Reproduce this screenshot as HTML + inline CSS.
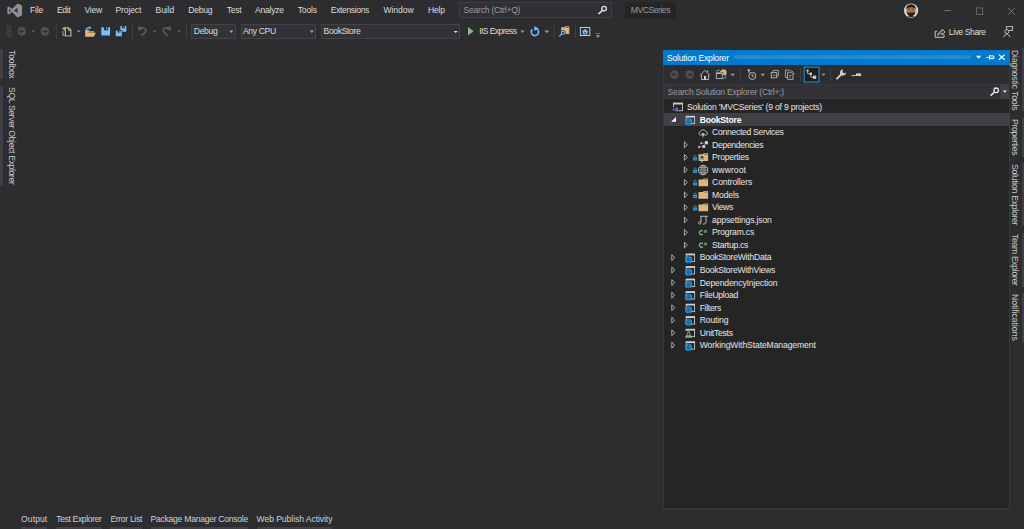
<!DOCTYPE html>
<html><head><meta charset="utf-8"><title>MVCSeries - Microsoft Visual Studio</title>
<style>
html,body{margin:0;padding:0;background:#2d2d30;overflow:hidden}
body{width:1024px;height:529px;position:relative;font-family:"Liberation Sans",sans-serif;font-size:8.6px;color:#d6d6d6}
.t{position:absolute;white-space:pre;line-height:12px;height:12px;font-size:8.6px}
.v{transform-origin:0 0;transform:rotate(90deg);color:#c8c8c8}
.b{position:absolute}
svg{position:absolute;overflow:visible}
</style></head><body>
<!-- search box & title -->
<div class="b" style="left:459.2px;top:2.4px;width:152.6px;height:15.2px;background:#303034;box-shadow:inset 0 0 0 1px #3d3d43"></div>
<div class="b" style="left:625px;top:2px;width:51px;height:17px;background:#252526"></div>
<!-- toolbar combos -->
<div class="b" style="left:190.7px;top:23.7px;width:45.5px;height:15px;background:#333337;box-shadow:inset 0 0 0 1px #434346"></div>
<div class="b" style="left:240.5px;top:23.7px;width:75.8px;height:15px;background:#333337;box-shadow:inset 0 0 0 1px #434346"></div>
<div class="b" style="left:321.2px;top:23.7px;width:138.5px;height:15px;background:#333337;box-shadow:inset 0 0 0 1px #434346"></div>
<!-- left auto-hide bars -->
<div class="b" style="left:0;top:49px;width:3.3px;height:29.6px;background:#3f3f46"></div>
<div class="b" style="left:0;top:86px;width:3.3px;height:99.5px;background:#3f3f46"></div>
<!-- right auto-hide bars -->
<div class="b" style="left:1021.6px;top:48.3px;width:2.4px;height:63.0px;background:#3f3f46"></div>
<div class="b" style="left:1021.6px;top:118px;width:2.4px;height:38.6px;background:#3f3f46"></div>
<div class="b" style="left:1021.6px;top:163.4px;width:2.4px;height:62.9px;background:#3f3f46"></div>
<div class="b" style="left:1021.6px;top:233px;width:2.4px;height:54.0px;background:#3f3f46"></div>
<div class="b" style="left:1021.6px;top:293px;width:2.4px;height:50.4px;background:#3f3f46"></div>

<!-- bottom underlines -->
<div class="b" style="left:21.1px;top:526.8px;width:26.2px;height:3px;background:#3f3f46"></div>
<div class="b" style="left:56.2px;top:526.8px;width:45.4px;height:3px;background:#3f3f46"></div>
<div class="b" style="left:110.4px;top:526.8px;width:31.6px;height:3px;background:#3f3f46"></div>
<div class="b" style="left:150.6px;top:526.8px;width:97.4px;height:3px;background:#3f3f46"></div>
<div class="b" style="left:256.6px;top:526.8px;width:75.8px;height:3px;background:#3f3f46"></div>
<!-- solution explorer panel -->
<div class="b" style="left:663px;top:50px;width:347.2px;height:459.5px;background:#37373b"></div>
<div class="b" style="left:664.1px;top:50px;width:345.2px;height:458.1px;background:#252526"></div>
<div class="b" style="left:664.1px;top:64.9px;width:345.2px;height:19.2px;background:#2d2d30"></div>
<div class="b" style="left:663.4px;top:50px;width:346.5px;height:14.9px;background:#007acc"></div>

<div class="b" style="left:664.1px;top:84px;width:337px;height:14.8px;background:#323236;box-shadow:inset 0 0 0 0.8px #3d3d43"></div>
<div class="b" style="left:1001.1px;top:84px;width:8.2px;height:14.8px;background:#3f3f46"></div>
<div class="b" style="left:664.1px;top:113.1px;width:345.6px;height:12.7px;background:#3f3f46"></div>
<svg width="1024" height="529" viewBox="0 0 1024 529" style="left:0;top:0">
<path fill="#8e8e95" fill-rule="evenodd" d="M17.6 3.5 L22 5.4 V15.6 L17.6 17.5 L12 12.1 L9 14.6 L7.4 13.8 V7.2 L9 6.4 L12 8.9 Z M17.5 7.7 L14.1 10.5 L17.5 13.3 Z M9.1 8.7 V12.3 L11 10.5 Z"/>
<path fill="#48484d" d="M6.60 24.80h1.25v1.25h-1.25zM9.10 24.80h1.25v1.25h-1.25zM7.85 26.05h1.25v1.25h-1.25zM10.35 26.05h1.25v1.25h-1.25zM6.60 27.30h1.25v1.25h-1.25zM9.10 27.30h1.25v1.25h-1.25zM7.85 28.55h1.25v1.25h-1.25zM10.35 28.55h1.25v1.25h-1.25zM6.60 29.80h1.25v1.25h-1.25zM9.10 29.80h1.25v1.25h-1.25zM7.85 31.05h1.25v1.25h-1.25zM10.35 31.05h1.25v1.25h-1.25zM6.60 32.30h1.25v1.25h-1.25zM9.10 32.30h1.25v1.25h-1.25zM7.85 33.55h1.25v1.25h-1.25zM10.35 33.55h1.25v1.25h-1.25zM6.60 34.80h1.25v1.25h-1.25zM9.10 34.80h1.25v1.25h-1.25zM7.85 36.05h1.25v1.25h-1.25zM10.35 36.05h1.25v1.25h-1.25z"/>
<circle cx="21.7" cy="31.4" r="4.3" fill="#505054"/>
<path d="M24.0 31.4 H19.7 M21.4 29.5 L19.5 31.4 L21.4 33.3" stroke="#2d2d30" stroke-width="1" fill="none"/>
<path fill="#626266" d="M31.50 30.6 H35.30 L33.40 32.69 Z"/>
<circle cx="44.9" cy="31.4" r="4.3" fill="#505054"/>
<path d="M42.6 31.4 H46.9 M45.199999999999996 29.5 L47.1 31.4 L45.199999999999996 33.3" stroke="#2d2d30" stroke-width="1" fill="none"/>
<rect x="55.9" y="24.3" width="1" height="15.2" fill="#414145"/>
<path d="M65.4 27.7 H68.6 L70.9 30 V36 H65.4 Z" stroke="#b6b6b6" stroke-width="1.15" fill="#2a2a2c"/><path d="M68.4 27.8 V30.2 H70.8" stroke="#d8d8d8" stroke-width="0.8" fill="none"/><path d="M62.9 31.2 V35.3 H64.8" stroke="#a8a8a8" stroke-width="1" fill="none"/>
<path fill="#d9a762" d="M64.1 26 L64.9 27.9 L66.6 28.6 L64.9 29.3 L64.1 31.2 L63.3 29.3 L61.6 28.6 L63.3 27.9 Z"/>
<path fill="#9a9a9a" d="M76.80 30.5 H80.60 L78.70 32.59 Z"/>
<path fill="#dcb67a" d="M85.2 30 H88.6 L89.6 31 H94.2 V32.7 H95.8 L93.8 36.8 H85.2 Z"/>
<path d="M88.6 32.1 H94" stroke="#5c4a2c" stroke-width="0.8" fill="none"/>
<path d="M86.4 30.6 C86 28.2 88 27.2 89.8 27.9" stroke="#63b0f4" stroke-width="1.5" fill="none"/><path fill="#63b0f4" d="M88.8 26 L91.6 27.6 L89.2 29.8 Z"/>
<path fill="#75beff" fill-rule="evenodd" d="M101.3 27.2 H110.0 V35.6 H101.3 Z M103.91 27.2 V30.22 H108.09 V27.2 Z"/>
<rect x="106.17" y="27.2" width="1.04" height="1.85" fill="#75beff"/>
<rect x="119.3" y="29.5" width="3.8" height="3.8" fill="#2d2d30"/>
<path fill="#75beff" fill-rule="evenodd" d="M120.4 26.1 H126.30000000000001 V31.8 H120.4 Z M122.17 26.1 V28.15 H125.00 V26.1 Z"/>
<rect x="123.70" y="26.1" width="0.71" height="1.25" fill="#75beff"/>
<rect x="115.2" y="30" width="7.2" height="6.8" fill="#2d2d30"/>
<path fill="#75beff" fill-rule="evenodd" d="M115.8 30.6 H121.8 V36.2 H115.8 Z M117.60 30.6 V32.62 H120.48 V30.6 Z"/>
<rect x="119.16" y="30.6" width="0.72" height="1.23" fill="#75beff"/>
<rect x="131.9" y="24.3" width="1" height="14.499999999999996" fill="#414145"/>
<path fill="#5e5e61" d="M138 26.6 L143 27.3 L138.7 31.6 Z"/><path d="M140.8 29.2 C143.4 26.8 147 28.6 145.6 31.4 C144.8 33 143 34.2 141.3 35.6" stroke="#5e5e61" stroke-width="1.5" fill="none"/>
<path fill="#5c5c5f" d="M152.40 30.6 H156.60 L154.50 32.91 Z"/>
<path fill="#5e5e61" d="M171.1 26.6 L166.1 27.3 L170.4 31.6 Z"/><path d="M168.3 29.2 C165.7 26.8 162.1 28.6 163.5 31.4 C164.3 33 166.1 34.2 167.8 35.6" stroke="#5e5e61" stroke-width="1.5" fill="none"/>
<path fill="#5c5c5f" d="M176.90 30.6 H181.20 L179.05 32.97 Z"/>
<rect x="185.9" y="24.3" width="1" height="14.499999999999996" fill="#414145"/>
<path fill="#a0a0a0" d="M229.10 30.6 H233.50 L231.30 33.02 Z"/>
<path fill="#a0a0a0" d="M309.60 30.6 H314.00 L311.80 33.02 Z"/>
<path fill="#e6e6e6" d="M453.70 30.9 H457.70 L455.70 33.10 Z"/>
<path fill="#84b884" d="M468 27 L473.6 31.3 L468 35.6 Z"/>
<path fill="#9a9a9a" d="M520.40 30.6 H524.60 L522.50 32.91 Z"/>
<path d="M536.6 28.6 A3.7 3.7 0 1 1 532.2 29.4" stroke="#75beff" stroke-width="1.6" fill="none" transform="rotate(0 534.9 32)"/>
<path fill="#75beff" d="M534.3 26 L538.6 28.4 L534.3 30.9 Z"/>
<path fill="#9a9a9a" d="M544.40 30.5 H549.30 L546.85 33.19 Z"/>
<rect x="553.8" y="24.5" width="1" height="13.700000000000003" fill="#414145"/>
<path fill="#dcb67a" d="M561.2 27.2 H564.6 L565.4 26.2 H569.3 V34 H561.2 Z"/>
<rect x="565.8" y="26.9" width="2.8" height="0.7" fill="#2d2d30"/>
<circle cx="563" cy="32.7" r="2.6" fill="#2d2d30"/><circle cx="563" cy="32.7" r="1.6" fill="#2d2d30" stroke="#75beff" stroke-width="1.1"/><path d="M561.8 33.9 L559.4 36.2" stroke="#75beff" stroke-width="1.3"/>
<rect x="575.1" y="24.5" width="1" height="13.700000000000003" fill="#414145"/>
<rect x="580.4" y="27.5" width="9.4" height="8" fill="none" stroke="#c8c8c8" stroke-width="1"/>
<path fill="#75beff" d="M585.1 28.9 L588 31.2 L587 34.4 H583.2 L582.2 31.2 Z"/><path fill="#2d2d30" d="M584.3 32.2 h1.6 v1.4 h-1.6z"/>
<rect x="595.6" y="33.2" width="4.6" height="0.8" fill="#8a8a8a"/>
<path fill="#9a9a9a" d="M595.50 35.2 H600.30 L597.90 37.84 Z"/>
<circle cx="604.1" cy="8.6" r="2.3" fill="none" stroke="#e0e0e0" stroke-width="1.3"/><path d="M602.5 10.3 L598.4 14" stroke="#e0e0e0" stroke-width="1.6"/>
<circle cx="911.1" cy="10.6" r="7.2" fill="#cfcfcf"/>
<clipPath id="av"><circle cx="911.1" cy="10.6" r="6.6"/></clipPath>
<g clip-path="url(#av)"><rect x="904" y="3" width="15" height="15" fill="#d2d0cc"/><path fill="#34343a" d="M903 18.5 C904 14.8 918 14.8 919 18.5 Z"/><ellipse cx="911" cy="10.4" rx="4.5" ry="5.4" fill="#a9734b"/><path fill="#2a1a12" d="M906.3 9.4 C905.6 2.6 916.4 2.6 915.7 9.4 C915 6.6 907 6.6 906.3 9.4 Z"/><path fill="#30201a" d="M906.6 11.2 C906.8 18 915.2 18 915.4 11.2 C914.6 13.4 913 12.4 911 12.4 C909 12.4 907.4 13.4 906.6 11.2 Z"/><path d="M908.2 9.2 h1.6 M912.2 9.2 h1.6" stroke="#3a2418" stroke-width="0.8"/></g>
<rect x="944.1" y="10.1" width="7" height="1" fill="#707070"/>
<rect x="976.4" y="7.9" width="6.2" height="6.6" fill="none" stroke="#6c6c6c" stroke-width="0.9"/>
<path d="M1008 7.8 L1015 14.7 M1015 7.8 L1008 14.7" stroke="#808080" stroke-width="0.9"/>
<path d="M937.2 31.2 H935.2 V37.3 H944 V34.6" stroke="#c8c8c8" stroke-width="1" fill="none"/>
<path d="M937.8 35.6 C938 32.4 940 31.2 942 31.2 V29 L945 32 L942 35 V33 C940.2 33 939 33.6 937.8 35.6 Z" fill="none" stroke="#c8c8c8" stroke-width="0.9"/>
<rect x="1006.4" y="26.6" width="6.2" height="3.8" fill="none" stroke="#c8c8c8" stroke-width="0.9"/>
<circle cx="1006.8" cy="31.6" r="2" fill="#2d2d30" stroke="#c8c8c8" stroke-width="0.9"/><path d="M1003.2 37 L1006.8 33.6 L1010.4 37" stroke="#c8c8c8" stroke-width="1" fill="none"/>
<path fill="#4b9fdc" d="M733.80 55.2h1.2v1.2h-1.2zM733.80 57.7h1.2v1.2h-1.2zM735.05 56.45h1.2v1.2h-1.2zM736.30 55.2h1.2v1.2h-1.2zM736.30 57.7h1.2v1.2h-1.2zM737.55 56.45h1.2v1.2h-1.2zM738.80 55.2h1.2v1.2h-1.2zM738.80 57.7h1.2v1.2h-1.2zM740.05 56.45h1.2v1.2h-1.2zM741.30 55.2h1.2v1.2h-1.2zM741.30 57.7h1.2v1.2h-1.2zM742.55 56.45h1.2v1.2h-1.2zM743.80 55.2h1.2v1.2h-1.2zM743.80 57.7h1.2v1.2h-1.2zM745.05 56.45h1.2v1.2h-1.2zM746.30 55.2h1.2v1.2h-1.2zM746.30 57.7h1.2v1.2h-1.2zM747.55 56.45h1.2v1.2h-1.2zM748.80 55.2h1.2v1.2h-1.2zM748.80 57.7h1.2v1.2h-1.2zM750.05 56.45h1.2v1.2h-1.2zM751.30 55.2h1.2v1.2h-1.2zM751.30 57.7h1.2v1.2h-1.2zM752.55 56.45h1.2v1.2h-1.2zM753.80 55.2h1.2v1.2h-1.2zM753.80 57.7h1.2v1.2h-1.2zM755.05 56.45h1.2v1.2h-1.2zM756.30 55.2h1.2v1.2h-1.2zM756.30 57.7h1.2v1.2h-1.2zM757.55 56.45h1.2v1.2h-1.2zM758.80 55.2h1.2v1.2h-1.2zM758.80 57.7h1.2v1.2h-1.2zM760.05 56.45h1.2v1.2h-1.2zM761.30 55.2h1.2v1.2h-1.2zM761.30 57.7h1.2v1.2h-1.2zM762.55 56.45h1.2v1.2h-1.2zM763.80 55.2h1.2v1.2h-1.2zM763.80 57.7h1.2v1.2h-1.2zM765.05 56.45h1.2v1.2h-1.2zM766.30 55.2h1.2v1.2h-1.2zM766.30 57.7h1.2v1.2h-1.2zM767.55 56.45h1.2v1.2h-1.2zM768.80 55.2h1.2v1.2h-1.2zM768.80 57.7h1.2v1.2h-1.2zM770.05 56.45h1.2v1.2h-1.2zM771.30 55.2h1.2v1.2h-1.2zM771.30 57.7h1.2v1.2h-1.2zM772.55 56.45h1.2v1.2h-1.2zM773.80 55.2h1.2v1.2h-1.2zM773.80 57.7h1.2v1.2h-1.2zM775.05 56.45h1.2v1.2h-1.2zM776.30 55.2h1.2v1.2h-1.2zM776.30 57.7h1.2v1.2h-1.2zM777.55 56.45h1.2v1.2h-1.2zM778.80 55.2h1.2v1.2h-1.2zM778.80 57.7h1.2v1.2h-1.2zM780.05 56.45h1.2v1.2h-1.2zM781.30 55.2h1.2v1.2h-1.2zM781.30 57.7h1.2v1.2h-1.2zM782.55 56.45h1.2v1.2h-1.2zM783.80 55.2h1.2v1.2h-1.2zM783.80 57.7h1.2v1.2h-1.2zM785.05 56.45h1.2v1.2h-1.2zM786.30 55.2h1.2v1.2h-1.2zM786.30 57.7h1.2v1.2h-1.2zM787.55 56.45h1.2v1.2h-1.2zM788.80 55.2h1.2v1.2h-1.2zM788.80 57.7h1.2v1.2h-1.2zM790.05 56.45h1.2v1.2h-1.2zM791.30 55.2h1.2v1.2h-1.2zM791.30 57.7h1.2v1.2h-1.2zM792.55 56.45h1.2v1.2h-1.2zM793.80 55.2h1.2v1.2h-1.2zM793.80 57.7h1.2v1.2h-1.2zM795.05 56.45h1.2v1.2h-1.2zM796.30 55.2h1.2v1.2h-1.2zM796.30 57.7h1.2v1.2h-1.2zM797.55 56.45h1.2v1.2h-1.2zM798.80 55.2h1.2v1.2h-1.2zM798.80 57.7h1.2v1.2h-1.2zM800.05 56.45h1.2v1.2h-1.2zM801.30 55.2h1.2v1.2h-1.2zM801.30 57.7h1.2v1.2h-1.2zM802.55 56.45h1.2v1.2h-1.2zM803.80 55.2h1.2v1.2h-1.2zM803.80 57.7h1.2v1.2h-1.2zM805.05 56.45h1.2v1.2h-1.2zM806.30 55.2h1.2v1.2h-1.2zM806.30 57.7h1.2v1.2h-1.2zM807.55 56.45h1.2v1.2h-1.2zM808.80 55.2h1.2v1.2h-1.2zM808.80 57.7h1.2v1.2h-1.2zM810.05 56.45h1.2v1.2h-1.2zM811.30 55.2h1.2v1.2h-1.2zM811.30 57.7h1.2v1.2h-1.2zM812.55 56.45h1.2v1.2h-1.2zM813.80 55.2h1.2v1.2h-1.2zM813.80 57.7h1.2v1.2h-1.2zM815.05 56.45h1.2v1.2h-1.2zM816.30 55.2h1.2v1.2h-1.2zM816.30 57.7h1.2v1.2h-1.2zM817.55 56.45h1.2v1.2h-1.2zM818.80 55.2h1.2v1.2h-1.2zM818.80 57.7h1.2v1.2h-1.2zM820.05 56.45h1.2v1.2h-1.2zM821.30 55.2h1.2v1.2h-1.2zM821.30 57.7h1.2v1.2h-1.2zM822.55 56.45h1.2v1.2h-1.2zM823.80 55.2h1.2v1.2h-1.2zM823.80 57.7h1.2v1.2h-1.2zM825.05 56.45h1.2v1.2h-1.2zM826.30 55.2h1.2v1.2h-1.2zM826.30 57.7h1.2v1.2h-1.2zM827.55 56.45h1.2v1.2h-1.2zM828.80 55.2h1.2v1.2h-1.2zM828.80 57.7h1.2v1.2h-1.2zM830.05 56.45h1.2v1.2h-1.2zM831.30 55.2h1.2v1.2h-1.2zM831.30 57.7h1.2v1.2h-1.2zM832.55 56.45h1.2v1.2h-1.2zM833.80 55.2h1.2v1.2h-1.2zM833.80 57.7h1.2v1.2h-1.2zM835.05 56.45h1.2v1.2h-1.2zM836.30 55.2h1.2v1.2h-1.2zM836.30 57.7h1.2v1.2h-1.2zM837.55 56.45h1.2v1.2h-1.2zM838.80 55.2h1.2v1.2h-1.2zM838.80 57.7h1.2v1.2h-1.2zM840.05 56.45h1.2v1.2h-1.2zM841.30 55.2h1.2v1.2h-1.2zM841.30 57.7h1.2v1.2h-1.2zM842.55 56.45h1.2v1.2h-1.2zM843.80 55.2h1.2v1.2h-1.2zM843.80 57.7h1.2v1.2h-1.2zM845.05 56.45h1.2v1.2h-1.2zM846.30 55.2h1.2v1.2h-1.2zM846.30 57.7h1.2v1.2h-1.2zM847.55 56.45h1.2v1.2h-1.2zM848.80 55.2h1.2v1.2h-1.2zM848.80 57.7h1.2v1.2h-1.2zM850.05 56.45h1.2v1.2h-1.2zM851.30 55.2h1.2v1.2h-1.2zM851.30 57.7h1.2v1.2h-1.2zM852.55 56.45h1.2v1.2h-1.2zM853.80 55.2h1.2v1.2h-1.2zM853.80 57.7h1.2v1.2h-1.2zM855.05 56.45h1.2v1.2h-1.2zM856.30 55.2h1.2v1.2h-1.2zM856.30 57.7h1.2v1.2h-1.2zM857.55 56.45h1.2v1.2h-1.2zM858.80 55.2h1.2v1.2h-1.2zM858.80 57.7h1.2v1.2h-1.2zM860.05 56.45h1.2v1.2h-1.2zM861.30 55.2h1.2v1.2h-1.2zM861.30 57.7h1.2v1.2h-1.2zM862.55 56.45h1.2v1.2h-1.2zM863.80 55.2h1.2v1.2h-1.2zM863.80 57.7h1.2v1.2h-1.2zM865.05 56.45h1.2v1.2h-1.2zM866.30 55.2h1.2v1.2h-1.2zM866.30 57.7h1.2v1.2h-1.2zM867.55 56.45h1.2v1.2h-1.2zM868.80 55.2h1.2v1.2h-1.2zM868.80 57.7h1.2v1.2h-1.2zM870.05 56.45h1.2v1.2h-1.2zM871.30 55.2h1.2v1.2h-1.2zM871.30 57.7h1.2v1.2h-1.2zM872.55 56.45h1.2v1.2h-1.2zM873.80 55.2h1.2v1.2h-1.2zM873.80 57.7h1.2v1.2h-1.2zM875.05 56.45h1.2v1.2h-1.2zM876.30 55.2h1.2v1.2h-1.2zM876.30 57.7h1.2v1.2h-1.2zM877.55 56.45h1.2v1.2h-1.2zM878.80 55.2h1.2v1.2h-1.2zM878.80 57.7h1.2v1.2h-1.2zM880.05 56.45h1.2v1.2h-1.2zM881.30 55.2h1.2v1.2h-1.2zM881.30 57.7h1.2v1.2h-1.2zM882.55 56.45h1.2v1.2h-1.2zM883.80 55.2h1.2v1.2h-1.2zM883.80 57.7h1.2v1.2h-1.2zM885.05 56.45h1.2v1.2h-1.2zM886.30 55.2h1.2v1.2h-1.2zM886.30 57.7h1.2v1.2h-1.2zM887.55 56.45h1.2v1.2h-1.2zM888.80 55.2h1.2v1.2h-1.2zM888.80 57.7h1.2v1.2h-1.2zM890.05 56.45h1.2v1.2h-1.2zM891.30 55.2h1.2v1.2h-1.2zM891.30 57.7h1.2v1.2h-1.2zM892.55 56.45h1.2v1.2h-1.2zM893.80 55.2h1.2v1.2h-1.2zM893.80 57.7h1.2v1.2h-1.2zM895.05 56.45h1.2v1.2h-1.2zM896.30 55.2h1.2v1.2h-1.2zM896.30 57.7h1.2v1.2h-1.2zM897.55 56.45h1.2v1.2h-1.2zM898.80 55.2h1.2v1.2h-1.2zM898.80 57.7h1.2v1.2h-1.2zM900.05 56.45h1.2v1.2h-1.2zM901.30 55.2h1.2v1.2h-1.2zM901.30 57.7h1.2v1.2h-1.2zM902.55 56.45h1.2v1.2h-1.2zM903.80 55.2h1.2v1.2h-1.2zM903.80 57.7h1.2v1.2h-1.2zM905.05 56.45h1.2v1.2h-1.2zM906.30 55.2h1.2v1.2h-1.2zM906.30 57.7h1.2v1.2h-1.2zM907.55 56.45h1.2v1.2h-1.2zM908.80 55.2h1.2v1.2h-1.2zM908.80 57.7h1.2v1.2h-1.2zM910.05 56.45h1.2v1.2h-1.2zM911.30 55.2h1.2v1.2h-1.2zM911.30 57.7h1.2v1.2h-1.2zM912.55 56.45h1.2v1.2h-1.2zM913.80 55.2h1.2v1.2h-1.2zM913.80 57.7h1.2v1.2h-1.2zM915.05 56.45h1.2v1.2h-1.2zM916.30 55.2h1.2v1.2h-1.2zM916.30 57.7h1.2v1.2h-1.2zM917.55 56.45h1.2v1.2h-1.2zM918.80 55.2h1.2v1.2h-1.2zM918.80 57.7h1.2v1.2h-1.2zM920.05 56.45h1.2v1.2h-1.2zM921.30 55.2h1.2v1.2h-1.2zM921.30 57.7h1.2v1.2h-1.2zM922.55 56.45h1.2v1.2h-1.2zM923.80 55.2h1.2v1.2h-1.2zM923.80 57.7h1.2v1.2h-1.2zM925.05 56.45h1.2v1.2h-1.2zM926.30 55.2h1.2v1.2h-1.2zM926.30 57.7h1.2v1.2h-1.2zM927.55 56.45h1.2v1.2h-1.2zM928.80 55.2h1.2v1.2h-1.2zM928.80 57.7h1.2v1.2h-1.2zM930.05 56.45h1.2v1.2h-1.2zM931.30 55.2h1.2v1.2h-1.2zM931.30 57.7h1.2v1.2h-1.2zM932.55 56.45h1.2v1.2h-1.2zM933.80 55.2h1.2v1.2h-1.2zM933.80 57.7h1.2v1.2h-1.2zM935.05 56.45h1.2v1.2h-1.2zM936.30 55.2h1.2v1.2h-1.2zM936.30 57.7h1.2v1.2h-1.2zM937.55 56.45h1.2v1.2h-1.2zM938.80 55.2h1.2v1.2h-1.2zM938.80 57.7h1.2v1.2h-1.2zM940.05 56.45h1.2v1.2h-1.2zM941.30 55.2h1.2v1.2h-1.2zM941.30 57.7h1.2v1.2h-1.2zM942.55 56.45h1.2v1.2h-1.2zM943.80 55.2h1.2v1.2h-1.2zM943.80 57.7h1.2v1.2h-1.2zM945.05 56.45h1.2v1.2h-1.2zM946.30 55.2h1.2v1.2h-1.2zM946.30 57.7h1.2v1.2h-1.2zM947.55 56.45h1.2v1.2h-1.2zM948.80 55.2h1.2v1.2h-1.2zM948.80 57.7h1.2v1.2h-1.2zM950.05 56.45h1.2v1.2h-1.2zM951.30 55.2h1.2v1.2h-1.2zM951.30 57.7h1.2v1.2h-1.2zM952.55 56.45h1.2v1.2h-1.2zM953.80 55.2h1.2v1.2h-1.2zM953.80 57.7h1.2v1.2h-1.2zM955.05 56.45h1.2v1.2h-1.2zM956.30 55.2h1.2v1.2h-1.2zM956.30 57.7h1.2v1.2h-1.2zM957.55 56.45h1.2v1.2h-1.2zM958.80 55.2h1.2v1.2h-1.2zM958.80 57.7h1.2v1.2h-1.2zM960.05 56.45h1.2v1.2h-1.2zM961.30 55.2h1.2v1.2h-1.2zM961.30 57.7h1.2v1.2h-1.2zM962.55 56.45h1.2v1.2h-1.2zM963.80 55.2h1.2v1.2h-1.2zM963.80 57.7h1.2v1.2h-1.2zM965.05 56.45h1.2v1.2h-1.2zM966.30 55.2h1.2v1.2h-1.2zM966.30 57.7h1.2v1.2h-1.2zM967.55 56.45h1.2v1.2h-1.2zM968.80 55.2h1.2v1.2h-1.2zM968.80 57.7h1.2v1.2h-1.2zM970.05 56.45h1.2v1.2h-1.2z"/>
<path fill="#ffffff" d="M975.90 55.8 H981.30 L978.60 58.77 Z"/>
<path d="M986.2 57.4 H989.6 M989.6 54.9 V59.9 M989.6 55.9 H993.8 V58.6 H989.6 M989.6 58.1 H993.8" stroke="#fff" stroke-width="0.9" fill="none"/>
<path d="M999 54.6 L1004.6 59.8 M1004.6 54.6 L999 59.8" stroke="#fff" stroke-width="1.2"/>
<circle cx="674.4" cy="74.6" r="4.3" fill="#4e4e52"/>
<path d="M676.6999999999999 74.6 H672.4 M674.1 72.69999999999999 L672.1999999999999 74.6 L674.1 76.5" stroke="#2d2d30" stroke-width="1" fill="none"/>
<circle cx="689.7" cy="74.6" r="4.3" fill="#4e4e52"/>
<path d="M687.4000000000001 74.6 H691.7 M690.0 72.69999999999999 L691.9000000000001 74.6 L690.0 76.5" stroke="#2d2d30" stroke-width="1" fill="none"/>
<path d="M700.2 75.4 L704.9 70.3 L709.8 75.4 M701.4 74.6 V79.5 H708.6 V74.6 M707.6 72.4 V70.4" stroke="#b8b8b8" stroke-width="0.95" fill="none"/><rect x="704" y="76" width="2" height="3.5" fill="#d8d8d8"/>
<path fill="#dcb67a" d="M720.2 71 L722.4 69.6 H725.4 L726.4 71 V75.2 H723.2 V72 H720.2 Z"/>
<rect x="716.3" y="73" width="6" height="5.6" fill="#2d2d30" stroke="#b4b4b4" stroke-width="0.9"/><rect x="716.3" y="72.6" width="6" height="1.4" fill="#b4b4b4"/>
<path d="M716.6 71.6 C717 70 718.6 69.8 719.6 70.4" stroke="#4ea6ea" stroke-width="1.1" fill="none"/><path d="M726 76.2 C725.6 78 724.2 78.6 723.2 78.2" stroke="#4ea6ea" stroke-width="1.1" fill="none"/>
<path fill="#9a9a9a" d="M730.50 73.8 H735.00 L732.75 76.27 Z"/>
<rect x="740.1" y="67.6" width="1" height="14.0" fill="#3f3f46"/>
<circle cx="752.4" cy="75.9" r="3.5" fill="none" stroke="#b8b8b8" stroke-width="1"/><path d="M752.2 73.8 V76.2 H754.2" stroke="#b8b8b8" stroke-width="0.9" fill="none"/>
<path fill="#c8c8c8" d="M747 69.6 H750.6 L749.3 71.2 V73 L748.3 72.4 V71.2 Z"/>
<path fill="#9a9a9a" d="M760.50 73.8 H765.00 L762.75 76.27 Z"/>
<path d="M773 72.4 V70.4 H778.6 V75.8 H776.8" stroke="#a8a8a8" stroke-width="0.9" fill="none"/><rect x="771.3" y="72.6" width="5.4" height="5.2" fill="#2d2d30" stroke="#b8b8b8" stroke-width="0.9"/><rect x="772.8" y="74.8" width="2.6" height="1" fill="#4ea6ea"/>
<path d="M787.4 77.4 H785.4 V70 H789.6 M790.6 70.6 C792.8 71 794 72.6 794 74.2" stroke="#a8a8a8" stroke-width="0.9" fill="none"/><path d="M787.6 72.2 H791 L793 74.2 V79.4 H787.6 Z" fill="#2d2d30" stroke="#b8b8b8" stroke-width="0.9"/><path d="M789.4 75.4 H791.4 M789.4 77 H790.8" stroke="#b8b8b8" stroke-width="0.8"/>
<rect x="800.1" y="67.6" width="1" height="14.0" fill="#3f3f46"/>
<rect x="804.2" y="67.2" width="14.8" height="14.8" fill="#1f1f20" stroke="#2b8fd6" stroke-width="1"/>
<rect x="806.6" y="69.6" width="2" height="2" fill="#d0d0d0"/><rect x="809.6" y="72.6" width="2.4" height="2.4" fill="#d0d0d0"/><rect x="813" y="75.6" width="3.2" height="3.2" fill="#d0d0d0"/><path d="M807.6 71 V73.8 H810 M810.8 74.6 V77.2 H813.4" stroke="#c0c0c0" stroke-width="0.8" fill="none"/>
<path fill="#9a9a9a" d="M821.30 73.7 H825.70 L823.50 76.12 Z"/>
<rect x="830.0" y="67.6" width="1" height="14.0" fill="#3f3f46"/>
<path d="M837 78.6 L842 73.6" stroke="#d0d0d0" stroke-width="2" stroke-linecap="round"/><path fill="#d0d0d0" fill-rule="evenodd" d="M843.2 69.6 A3 3 0 1 0 846 72.6 L844 73.6 L842.4 72 Z"/>
<rect x="851.5" y="75.1" width="9.6" height="0.9" fill="#d0d0d0"/><rect x="856" y="73.4" width="5.1" height="2.2" fill="#d0d0d0"/>
<circle cx="996.2" cy="90.3" r="2.3" fill="none" stroke="#e6e6e6" stroke-width="1.3"/><path d="M994.6 92 L990.6 95.6" stroke="#e6e6e6" stroke-width="1.6"/>
<path fill="#f0f0f0" d="M1002.70 90.5 H1006.90 L1004.80 92.81 Z"/>
<rect x="673.6" y="103.30" width="8.8" height="7.4" fill="none" stroke="#d0d0d0" stroke-width="0.9"/><rect x="673.2" y="102.70" width="9.6" height="1.8" fill="#d0d0d0"/>
<rect x="672.4" y="107.30" width="6" height="5" fill="#252526"/><path fill="#7a6ccc" fill-rule="evenodd" d="M676.4 107.50 L678 108.10 V111.10 L676.4 111.70 L674.4 110.00 L673.4 110.80 L672.8 110.50 V108.70 L673.4 108.40 L674.4 109.20 Z M676.4 108.70 L675.2 109.60 L676.4 110.50 Z"/>
<path fill="#ffffff" d="M671.2 121.83 H676 V117.03 Z"/>
<rect x="686.2" y="116.43" width="8.4" height="7.2" fill="none" stroke="#c4c4c4" stroke-width="0.9"/><rect x="685.8" y="115.83" width="9.2" height="1.7" fill="#d0d0d0"/>
<circle cx="688.6" cy="121.83" r="3.6" fill="#2b9be0"/><path d="M685.4 121.83 H691.8 M688.6 118.43 V125.23" stroke="#17598f" stroke-width="0.7"/><ellipse cx="688.6" cy="121.83" rx="1.6" ry="3.3" fill="none" stroke="#17598f" stroke-width="0.7"/>
<path d="M701.6 135.16 H700.4 A1.8 1.8 0 0 1 700.3 131.66 A2.9 2.7 0 0 1 705.7 131.26 A2.1 2 0 0 1 705.8 135.16 H704.4" fill="none" stroke="#c0c0c0" stroke-width="0.9"/><path d="M703 133.36 V137.36 M701.7 133.76 H704.3 L703 135.66 Z" stroke="#c8c8c8" stroke-width="0.8" fill="#c8c8c8"/>
<path d="M684.40 141.89 L687.40 144.79 L684.40 147.69 Z" fill="none" stroke="#c4c4c4" stroke-width="0.85"/>
<rect x="704.8" y="141.09" width="3.2" height="3.2" fill="#d0d0d0"/><rect x="702.4" y="145.09" width="2.8" height="2.8" fill="#d0d0d0"/><rect x="698.2" y="145.89" width="2" height="2" fill="#c0c0c0"/><rect x="700.4" y="142.29" width="1.8" height="1.8" fill="#c0c0c0"/><path d="M700.2 146.89 H702.4 M702.2 143.09 H704.8 M703.8 145.09 L705.6 144.09" stroke="#9a9a9a" stroke-width="0.6"/>
<path d="M684.40 154.42 L687.40 157.32 L684.40 160.22 Z" fill="none" stroke="#c4c4c4" stroke-width="0.85"/>
<rect x="693.1" y="157.42" width="3.9" height="3" fill="#2b9be0"/><path d="M694 157.42 V156.42 A1.05 1.05 0 0 1 696.1 156.42 V157.42" fill="none" stroke="#2b9be0" stroke-width="0.8"/><rect x="694.7" y="158.42" width="0.8" height="1" fill="#252526"/>
<path fill="#dcb67a" d="M698.5 154.32 H702.8 L703.8 153.32 H708.1 V161.12 H698.5 Z"/><rect x="704.4" y="154.12" width="3" height="0.7" fill="#252526" opacity="0.7"/>
<circle cx="702" cy="158.02" r="2.1" fill="#252526"/><path d="M702 158.62 V162.22" stroke="#d0d0d0" stroke-width="1.2"/><path d="M700.8 156.62 A1.6 1.6 0 1 0 703.2 156.62" fill="none" stroke="#d0d0d0" stroke-width="0.9"/>
<path d="M684.40 166.95 L687.40 169.85 L684.40 172.75 Z" fill="none" stroke="#c4c4c4" stroke-width="0.85"/>
<rect x="693.1" y="169.95" width="3.9" height="3" fill="#2b9be0"/><path d="M694 169.95 V168.95 A1.05 1.05 0 0 1 696.1 168.95 V169.95" fill="none" stroke="#2b9be0" stroke-width="0.8"/><rect x="694.7" y="170.95" width="0.8" height="1" fill="#252526"/>
<circle cx="703.1" cy="170.05" r="4.7" fill="none" stroke="#c8c8c8" stroke-width="0.9"/><ellipse cx="703.1" cy="170.05" rx="2" ry="4.7" fill="none" stroke="#c8c8c8" stroke-width="0.7"/><path d="M698.4 170.05 H707.8 M703.1 165.35 V174.75 M699.2 167.65 H707 M699.2 172.45 H707" stroke="#c8c8c8" stroke-width="0.6"/>
<path d="M684.40 179.48 L687.40 182.38 L684.40 185.28 Z" fill="none" stroke="#c4c4c4" stroke-width="0.85"/>
<rect x="693.1" y="182.48" width="3.9" height="3" fill="#2b9be0"/><path d="M694 182.48 V181.48 A1.05 1.05 0 0 1 696.1 181.48 V182.48" fill="none" stroke="#2b9be0" stroke-width="0.8"/><rect x="694.7" y="183.48" width="0.8" height="1" fill="#252526"/>
<path fill="#dcb67a" d="M698.5 179.38 H702.8 L703.8 178.38 H708.1 V186.18 H698.5 Z"/><rect x="704.4" y="179.18" width="3" height="0.7" fill="#252526" opacity="0.7"/>
<path d="M684.40 192.01 L687.40 194.91 L684.40 197.81 Z" fill="none" stroke="#c4c4c4" stroke-width="0.85"/>
<rect x="693.1" y="195.01" width="3.9" height="3" fill="#2b9be0"/><path d="M694 195.01 V194.01 A1.05 1.05 0 0 1 696.1 194.01 V195.01" fill="none" stroke="#2b9be0" stroke-width="0.8"/><rect x="694.7" y="196.01" width="0.8" height="1" fill="#252526"/>
<path fill="#dcb67a" d="M698.5 191.91 H702.8 L703.8 190.91 H708.1 V198.71 H698.5 Z"/><rect x="704.4" y="191.71" width="3" height="0.7" fill="#252526" opacity="0.7"/>
<path d="M684.40 204.54 L687.40 207.44 L684.40 210.34 Z" fill="none" stroke="#c4c4c4" stroke-width="0.85"/>
<rect x="693.1" y="207.54" width="3.9" height="3" fill="#2b9be0"/><path d="M694 207.54 V206.54 A1.05 1.05 0 0 1 696.1 206.54 V207.54" fill="none" stroke="#2b9be0" stroke-width="0.8"/><rect x="694.7" y="208.54" width="0.8" height="1" fill="#252526"/>
<path fill="#dcb67a" d="M698.5 204.44 H702.8 L703.8 203.44 H708.1 V211.24 H698.5 Z"/><rect x="704.4" y="204.24" width="3" height="0.7" fill="#252526" opacity="0.7"/>
<path d="M684.40 217.07 L687.40 219.97 L684.40 222.87 Z" fill="none" stroke="#c4c4c4" stroke-width="0.85"/>
<path d="M700.2 216.27 H707.8 M701 216.27 V221.87 M706 216.27 V221.87 C706 223.87 704.8 224.07 703 224.07" fill="none" stroke="#c8c8c8" stroke-width="0.9"/><circle cx="699.8" cy="222.87" r="1.3" fill="none" stroke="#c8c8c8" stroke-width="0.8"/>
<path d="M684.40 229.60 L687.40 232.50 L684.40 235.40 Z" fill="none" stroke="#c4c4c4" stroke-width="0.85"/>
<path d="M702.8 231.20 A2 2.1 0 1 0 702.8 234.10" fill="none" stroke="#86c686" stroke-width="1.2"/><path d="M704.2 230.80 H707 M704.2 232.00 H707 M705 230.00 V232.80 M706.2 230.00 V232.80" stroke="#86c686" stroke-width="0.6"/>
<path d="M684.40 242.13 L687.40 245.03 L684.40 247.93 Z" fill="none" stroke="#c4c4c4" stroke-width="0.85"/>
<path d="M702.8 243.73 A2 2.1 0 1 0 702.8 246.63" fill="none" stroke="#86c686" stroke-width="1.2"/><path d="M704.2 243.33 H707 M704.2 244.53 H707 M705 242.53 V245.33 M706.2 242.53 V245.33" stroke="#86c686" stroke-width="0.6"/>
<path d="M671.80 254.66 L674.80 257.56 L671.80 260.46 Z" fill="none" stroke="#c4c4c4" stroke-width="0.85"/>
<rect x="686.2" y="254.26" width="8.4" height="7.2" fill="none" stroke="#c4c4c4" stroke-width="0.9"/><rect x="685.8" y="253.66" width="9.2" height="1.7" fill="#d0d0d0"/>
<circle cx="688.6" cy="259.66" r="3.6" fill="#2b9be0"/><path d="M685.4 259.66 H691.8 M688.6 256.26 V263.06" stroke="#17598f" stroke-width="0.7"/><ellipse cx="688.6" cy="259.66" rx="1.6" ry="3.3" fill="none" stroke="#17598f" stroke-width="0.7"/>
<path d="M671.80 267.19 L674.80 270.09 L671.80 272.99 Z" fill="none" stroke="#c4c4c4" stroke-width="0.85"/>
<rect x="686.2" y="266.79" width="8.4" height="7.2" fill="none" stroke="#c4c4c4" stroke-width="0.9"/><rect x="685.8" y="266.19" width="9.2" height="1.7" fill="#d0d0d0"/>
<circle cx="688.6" cy="272.19" r="3.6" fill="#2b9be0"/><path d="M685.4 272.19 H691.8 M688.6 268.79 V275.59" stroke="#17598f" stroke-width="0.7"/><ellipse cx="688.6" cy="272.19" rx="1.6" ry="3.3" fill="none" stroke="#17598f" stroke-width="0.7"/>
<path d="M671.80 279.72 L674.80 282.62 L671.80 285.52 Z" fill="none" stroke="#c4c4c4" stroke-width="0.85"/>
<rect x="686.2" y="279.32" width="8.4" height="7.2" fill="none" stroke="#c4c4c4" stroke-width="0.9"/><rect x="685.8" y="278.72" width="9.2" height="1.7" fill="#d0d0d0"/>
<circle cx="688.6" cy="284.72" r="3.6" fill="#2b9be0"/><path d="M685.4 284.72 H691.8 M688.6 281.32 V288.12" stroke="#17598f" stroke-width="0.7"/><ellipse cx="688.6" cy="284.72" rx="1.6" ry="3.3" fill="none" stroke="#17598f" stroke-width="0.7"/>
<path d="M671.80 292.25 L674.80 295.15 L671.80 298.05 Z" fill="none" stroke="#c4c4c4" stroke-width="0.85"/>
<rect x="686.2" y="291.85" width="8.4" height="7.2" fill="none" stroke="#c4c4c4" stroke-width="0.9"/><rect x="685.8" y="291.25" width="9.2" height="1.7" fill="#d0d0d0"/>
<circle cx="688.6" cy="297.25" r="3.6" fill="#2b9be0"/><path d="M685.4 297.25 H691.8 M688.6 293.85 V300.65" stroke="#17598f" stroke-width="0.7"/><ellipse cx="688.6" cy="297.25" rx="1.6" ry="3.3" fill="none" stroke="#17598f" stroke-width="0.7"/>
<path d="M671.80 304.78 L674.80 307.68 L671.80 310.58 Z" fill="none" stroke="#c4c4c4" stroke-width="0.85"/>
<rect x="686.2" y="304.38" width="8.4" height="7.2" fill="none" stroke="#c4c4c4" stroke-width="0.9"/><rect x="685.8" y="303.78" width="9.2" height="1.7" fill="#d0d0d0"/>
<circle cx="688.6" cy="309.78" r="3.6" fill="#2b9be0"/><path d="M685.4 309.78 H691.8 M688.6 306.38 V313.18" stroke="#17598f" stroke-width="0.7"/><ellipse cx="688.6" cy="309.78" rx="1.6" ry="3.3" fill="none" stroke="#17598f" stroke-width="0.7"/>
<path d="M671.80 317.31 L674.80 320.21 L671.80 323.11 Z" fill="none" stroke="#c4c4c4" stroke-width="0.85"/>
<rect x="686.2" y="316.91" width="8.4" height="7.2" fill="none" stroke="#c4c4c4" stroke-width="0.9"/><rect x="685.8" y="316.31" width="9.2" height="1.7" fill="#d0d0d0"/>
<circle cx="688.6" cy="322.31" r="3.6" fill="#2b9be0"/><path d="M685.4 322.31 H691.8 M688.6 318.91 V325.71" stroke="#17598f" stroke-width="0.7"/><ellipse cx="688.6" cy="322.31" rx="1.6" ry="3.3" fill="none" stroke="#17598f" stroke-width="0.7"/>
<path d="M671.80 329.84 L674.80 332.74 L671.80 335.64 Z" fill="none" stroke="#c4c4c4" stroke-width="0.85"/>
<rect x="686.2" y="329.44" width="8.4" height="7.2" fill="none" stroke="#c4c4c4" stroke-width="0.9"/><rect x="685.8" y="328.84" width="9.2" height="1.7" fill="#d0d0d0"/>
<rect x="684.6" y="330.84" width="6.6" height="7.4" fill="#252526"/><path d="M687.4 330.24 H689.8 M688 330.24 V333.04 L685.4 337.24 H691.8 L689.2 333.04 V330.24" fill="none" stroke="#7cba7c" stroke-width="0.9"/><path fill="#7cba7c" d="M686.6 335.24 H690.6 L691.8 337.24 H685.4 Z"/>
<path d="M671.80 342.37 L674.80 345.27 L671.80 348.17 Z" fill="none" stroke="#c4c4c4" stroke-width="0.85"/>
<rect x="686.2" y="341.97" width="8.4" height="7.2" fill="none" stroke="#c4c4c4" stroke-width="0.9"/><rect x="685.8" y="341.37" width="9.2" height="1.7" fill="#d0d0d0"/>
<circle cx="688.6" cy="347.37" r="3.6" fill="#2b9be0"/><path d="M685.4 347.37 H691.8 M688.6 343.97 V350.77" stroke="#17598f" stroke-width="0.7"/><ellipse cx="688.6" cy="347.37" rx="1.6" ry="3.3" fill="none" stroke="#17598f" stroke-width="0.7"/>
</svg>
<span class="t" style="left:30.00px;top:4.00px;color:#dcdcdc;font-weight:400;letter-spacing:-0.215px">File</span>
<span class="t" style="left:56.90px;top:4.00px;color:#dcdcdc;font-weight:400;letter-spacing:-0.328px">Edit</span>
<span class="t" style="left:84.40px;top:4.00px;color:#dcdcdc;font-weight:400;letter-spacing:-0.246px">View</span>
<span class="t" style="left:115.50px;top:4.00px;color:#dcdcdc;font-weight:400;letter-spacing:-0.143px">Project</span>
<span class="t" style="left:155.50px;top:4.00px;color:#dcdcdc;font-weight:400;letter-spacing:-0.072px">Build</span>
<span class="t" style="left:188.25px;top:4.00px;color:#dcdcdc;font-weight:400;letter-spacing:-0.266px">Debug</span>
<span class="t" style="left:226.75px;top:4.00px;color:#dcdcdc;font-weight:400;letter-spacing:-0.316px">Test</span>
<span class="t" style="left:255.00px;top:4.00px;color:#dcdcdc;font-weight:400;letter-spacing:-0.261px">Analyze</span>
<span class="t" style="left:297.80px;top:4.00px;color:#dcdcdc;font-weight:400;letter-spacing:-0.223px">Tools</span>
<span class="t" style="left:330.80px;top:4.00px;color:#dcdcdc;font-weight:400;letter-spacing:-0.385px">Extensions</span>
<span class="t" style="left:383.50px;top:4.00px;color:#dcdcdc;font-weight:400;letter-spacing:-0.096px">Window</span>
<span class="t" style="left:428.00px;top:4.00px;color:#dcdcdc;font-weight:400;letter-spacing:-0.234px">Help</span>
<span class="t" style="left:463.50px;top:4.00px;color:#9c9c9c;font-weight:400;letter-spacing:-0.245px">Search (Ctrl+Q)</span>
<span class="t" style="left:630.75px;top:4.00px;color:#9a9a9a;font-weight:400;letter-spacing:-0.469px">MVCSeries</span>
<span class="t" style="left:193.75px;top:24.90px;color:#dcdcdc;font-weight:400;letter-spacing:-0.316px">Debug</span>
<span class="t" style="left:243.00px;top:24.90px;color:#dcdcdc;font-weight:400;letter-spacing:-0.371px">Any CPU</span>
<span class="t" style="left:323.50px;top:24.90px;color:#dcdcdc;font-weight:400;letter-spacing:-0.349px">BookStore</span>
<span class="t" style="left:479.25px;top:24.90px;color:#dcdcdc;font-weight:400;letter-spacing:-0.609px">IIS Express</span>
<span class="t" style="left:948.80px;top:26.30px;color:#dcdcdc;font-weight:400;letter-spacing:-0.429px">Live Share</span>
<span class="t" style="left:666.90px;top:51.60px;color:#ffffff;font-weight:400;letter-spacing:-0.209px">Solution Explorer</span>
<span class="t" style="left:667.60px;top:85.90px;color:#9a9a9a;font-weight:400;letter-spacing:-0.229px">Search Solution Explorer (Ctrl+;)</span>
<span class="t" style="left:687.00px;top:101.10px;color:#e6e6e6;font-weight:400;letter-spacing:-0.192px">Solution 'MVCSeries' (9 of 9 projects)</span>
<span class="t" style="left:699.70px;top:113.63px;color:#ffffff;font-weight:700;letter-spacing:-0.206px">BookStore</span>
<span class="t" style="left:712.10px;top:126.16px;color:#e6e6e6;font-weight:400;letter-spacing:-0.301px">Connected Services</span>
<span class="t" style="left:712.10px;top:138.69px;color:#e6e6e6;font-weight:400;letter-spacing:-0.321px">Dependencies</span>
<span class="t" style="left:712.10px;top:151.22px;color:#e6e6e6;font-weight:400;letter-spacing:-0.257px">Properties</span>
<span class="t" style="left:712.10px;top:163.75px;color:#e6e6e6;font-weight:400;letter-spacing:0.066px">wwwroot</span>
<span class="t" style="left:712.10px;top:176.28px;color:#e6e6e6;font-weight:400;letter-spacing:-0.142px">Controllers</span>
<span class="t" style="left:712.10px;top:188.81px;color:#e6e6e6;font-weight:400;letter-spacing:-0.151px">Models</span>
<span class="t" style="left:712.10px;top:201.34px;color:#e6e6e6;font-weight:400;letter-spacing:-0.416px">Views</span>
<span class="t" style="left:712.10px;top:213.87px;color:#e6e6e6;font-weight:400;letter-spacing:-0.157px">appsettings.json</span>
<span class="t" style="left:712.10px;top:226.40px;color:#e6e6e6;font-weight:400;letter-spacing:-0.204px">Program.cs</span>
<span class="t" style="left:712.10px;top:238.93px;color:#e6e6e6;font-weight:400;letter-spacing:-0.270px">Startup.cs</span>
<span class="t" style="left:699.70px;top:251.46px;color:#e6e6e6;font-weight:400;letter-spacing:-0.233px">BookStoreWithData</span>
<span class="t" style="left:699.70px;top:263.99px;color:#e6e6e6;font-weight:400;letter-spacing:-0.261px">BookStoreWithViews</span>
<span class="t" style="left:699.70px;top:276.52px;color:#e6e6e6;font-weight:400;letter-spacing:-0.140px">DependencyInjection</span>
<span class="t" style="left:699.70px;top:289.05px;color:#e6e6e6;font-weight:400;letter-spacing:-0.279px">FileUpload</span>
<span class="t" style="left:699.70px;top:301.58px;color:#e6e6e6;font-weight:400;letter-spacing:-0.315px">Filters</span>
<span class="t" style="left:699.70px;top:314.11px;color:#e6e6e6;font-weight:400;letter-spacing:-0.146px">Routing</span>
<span class="t" style="left:699.70px;top:326.64px;color:#e6e6e6;font-weight:400;letter-spacing:-0.249px">UnitTests</span>
<span class="t" style="left:699.70px;top:339.17px;color:#e6e6e6;font-weight:400;letter-spacing:-0.107px">WorkingWithStateManagement</span>
<span class="t" style="left:21.10px;top:512.80px;color:#d0d0d0;font-weight:400;letter-spacing:0.065px">Output</span>
<span class="t" style="left:56.25px;top:512.80px;color:#d0d0d0;font-weight:400;letter-spacing:-0.370px">Test Explorer</span>
<span class="t" style="left:110.40px;top:512.80px;color:#d0d0d0;font-weight:400;letter-spacing:-0.326px">Error List</span>
<span class="t" style="left:150.60px;top:512.80px;color:#d0d0d0;font-weight:400;letter-spacing:-0.273px">Package Manager Console</span>
<span class="t" style="left:256.60px;top:512.80px;color:#d0d0d0;font-weight:400;letter-spacing:-0.071px">Web Publish Activity</span>
<span class="t v" style="left:17.50px;top:49.80px;letter-spacing:-0.118px">Toolbox</span>
<span class="t v" style="left:17.50px;top:87.20px;letter-spacing:-0.331px">SQL Server Object Explorer</span>
<span class="t v" style="left:1021.30px;top:49.50px;letter-spacing:-0.120px">Diagnostic Tools</span>
<span class="t v" style="left:1021.30px;top:118.80px;letter-spacing:-0.297px">Properties</span>
<span class="t v" style="left:1021.30px;top:163.60px;letter-spacing:-0.250px">Solution Explorer</span>
<span class="t v" style="left:1021.30px;top:234.00px;letter-spacing:-0.300px">Team Explorer</span>
<span class="t v" style="left:1021.30px;top:294.40px;letter-spacing:-0.009px">Notifications</span>
</body></html>
